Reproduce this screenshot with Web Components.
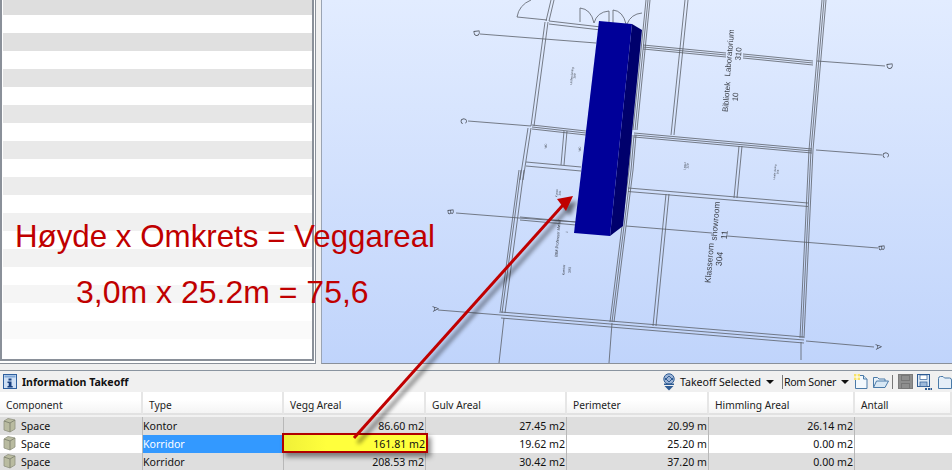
<!DOCTYPE html>
<html><head><meta charset="utf-8">
<style>
html,body{margin:0;padding:0;width:952px;height:470px;overflow:hidden;background:#f0f0f0}
body{font:10.6px "Noto Sans",Tahoma,sans-serif}
</style></head><body>
<app-shell>
  <stripe-panel slot="left"></stripe-panel>
  <model-view slot="view"></model-view>
  <takeoff-panel slot="bottom">
    <takeoff-row head>
      <takeoff-cell head>Component</takeoff-cell><takeoff-cell head>Type</takeoff-cell><takeoff-cell head>Vegg Areal</takeoff-cell><takeoff-cell head>Gulv Areal</takeoff-cell><takeoff-cell head>Perimeter</takeoff-cell><takeoff-cell head>Himmling Areal</takeoff-cell><takeoff-cell head last>Antall</takeoff-cell>
    </takeoff-row>
    <takeoff-row shade>
      <takeoff-cell icon>Space</takeoff-cell><takeoff-cell>Kontor</takeoff-cell><takeoff-cell num>86.60 m2</takeoff-cell><takeoff-cell num>27.45 m2</takeoff-cell><takeoff-cell num>20.99 m</takeoff-cell><takeoff-cell num>26.14 m2</takeoff-cell><takeoff-cell last></takeoff-cell>
    </takeoff-row>
    <takeoff-row>
      <takeoff-cell icon>Space</takeoff-cell><takeoff-cell selected>Korridor</takeoff-cell><takeoff-cell num mark>161.81 m2</takeoff-cell><takeoff-cell num>19.62 m2</takeoff-cell><takeoff-cell num>25.20 m</takeoff-cell><takeoff-cell num>0.00 m2</takeoff-cell><takeoff-cell last></takeoff-cell>
    </takeoff-row>
    <takeoff-row shade>
      <takeoff-cell icon>Space</takeoff-cell><takeoff-cell>Korridor</takeoff-cell><takeoff-cell num>208.53 m2</takeoff-cell><takeoff-cell num>30.42 m2</takeoff-cell><takeoff-cell num>37.20 m</takeoff-cell><takeoff-cell num>0.00 m2</takeoff-cell><takeoff-cell last></takeoff-cell>
    </takeoff-row>
  </takeoff-panel>
  <note-overlay slot="over"></note-overlay>
</app-shell>
<script>
function def(name, css, html, init){
  customElements.define(name, class extends HTMLElement{
    connectedCallback(){
      if(this.shadowRoot) return;
      const r=this.attachShadow({mode:'open'});
      r.innerHTML='<style>'+css+'</style>'+(typeof html==='function'?html(this):html);
      if(init) init(this,r);
    }
  });
}
def('app-shell',`
  :host{display:block;position:relative;width:952px;height:470px;overflow:hidden;background:#f0f0f0}
  .top{display:flex;height:364px}
  .gap{height:6px}
`,`<div class="top"><slot name="left"></slot><slot name="view"></slot></div><div class="gap"></div><slot name="bottom"></slot><slot name="over"></slot>`);

def('stripe-panel',`
  :host{display:block;width:316px;height:364px;box-sizing:border-box;flex:none;margin-right:5px;background:#fff;
    border-right:1px solid #8a9099;border-bottom:1px solid #8a9099}
  .in{box-sizing:border-box;height:361px;margin-bottom:1px;border-left:2px solid #8a9099;border-right:2px solid #8a9099;border-bottom:2px solid #8a9099;margin-left:0;margin-right:1px;padding-left:1px;background:#fff;overflow:hidden}
  .s{height:18px}
  .s:first-child{height:15px}
`,()=>{
  const g=['#dedede','#e0e0e0','#e3e3e3','#e6e6e6','#e9e9e9','#ececec','#f0f0f0','#f2f2f2','#f5f5f5','#fafafa'];
  return '<div class="in">'+g.map(c=>`<div class="s" style="background:${c}"></div><div class="s"></div>`).join('')+'</div>';
});

def('model-view',`
  :host{display:block;flex:1;height:363px;border-bottom:1px solid #8a9099;border-left:1px solid #9aa4b4;box-sizing:content-box;
    background:linear-gradient(#e2ecff,#c0d4fb);overflow:hidden}
  svg{display:block;filter:blur(.35px)}
  text{font-family:"Liberation Sans",Arial,sans-serif;fill:#3c4048}
`,`<svg id="s" width="631" height="363" viewBox="321 0 631 363" xmlns="http://www.w3.org/2000/svg"></svg>`,(el,r)=>{
  let o='';
  const L=(a,b,c,d,col='#5a6068',w=.8)=>{o+=`<line x1="${a}" y1="${b}" x2="${c}" y2="${d}" stroke="${col}" stroke-width="${w}"/>`};
  const W=(a,b,c,d,offs,dx,dy)=>offs.forEach(k=>L(a+k*dx,b+k*dy,c+k*dx,d+k*dy));
  const V=(a,b,c,d,offs)=>W(a,b,c,d,offs,1,0);
  const H=(a,b,c,d,offs)=>W(a,b,c,d,offs,0,1);
  L(479,34,595,43); L(816,61,884,66);
  L(467,121,530,126); L(815,150,881,155);
  L(455,213,518,218); L(518,218,575,222); L(625,226,711,233); L(726,236,877,248);
  L(437,310,500,315); L(805,341,873,347);
  V(821,0,808,150,[0,2,4]); V(808,150,799,338,[0,2,4]); L(800,342,800,360);
  V(550,0,545,21,[0,3]); V(544,22,530,126,[0,3]); V(527,128,519,180,[0,3]);
  V(520,170,501,313,[-2,0,3]); L(503,318,498,363);
  V(645,0,632,130,[0,2,4]); V(631,135,628,170,[0,2,4]); V(628,170,609,322,[0,2,4]); L(611,323,608,363);
  V(684,0,670,135,[0,3]);
  V(738,146,733,198,[0,3]);
  V(665,194,652,326,[0,3]);
  V(563,131,560,165,[0,3]);
  H(548,21,600,27,[0,3]); H(642,45,725,53,[0,2,4]); H(742,54,812,61,[0,2,4]);
  H(531,125,585,131,[0,2,4]);
  H(633,133,811,149,[0,2,4]);
  H(525,162,580,167,[0,4]);
  H(627,188,807,203,[0,3.5]);
  H(519,217,575,222,[0,3]);
  H(500,312,803,337,[0,3,6]);
  const P=(d)=>{o+=`<path d="${d}" fill="none" stroke="#5a6068" stroke-width=".8"/>`};
  P('M516 17Q518 5 530 0'); L(516,17,546,20);
  P('M579 8Q590 9 593 23'); L(579,8,579,22);
  P('M608 11Q596 12 593 23'); L(608,11,608,25);
  P('M612 10Q622 11 625 24'); L(612,10,612,25);
  P('M641 13Q630 14 626 24');
  o+=`<polygon points="631,24 641,30 622,226 609,236" fill="#00006c"/><polygon points="598,21 631,24 609,236 573,233" fill="#000099"/>`;
  const M=(t,x,y)=>{o+=`<text x="${x}" y="${y}" font-size="8.5" transform="rotate(85 ${x} ${y})" text-anchor="middle" dominant-baseline="middle">${t}</text>`};
  M('D',475,33);M('D',888,66);M('C',462,121);M('C',884,155);M('B',449,212);M('B',880,248);M('A',434,309);M('A',877,347);
  const T=(t,x,y,s)=>{o+=`<text x="${x}" y="${y}" font-size="${s}" transform="rotate(-85 ${x} ${y})" text-anchor="middle" dominant-baseline="middle">${t}</text>`};
  T('Laboratorium',729,53,8);T('310',738,54,8);T('Bibliotek',726,97,8);T('10',735,97,8);
  T('Klasserom',709,263,8.5);T('304',719,259,8.5);T('showroom',715,221,8.5);T('11',724,235,8.5);
  T('Undervisning',571,76,3);T('300',574,76,3);T('Lager',684,166,3);T('310',687,166,3);
  T('Undervisning',774,172,2.6);T('306',777,172,2.6);T('WC',545,146,3);T('WC',579,149,3);
  T('BIM Professor Møller',557,238,4);T('1',566,232,3);T('Kontor',563,270,3.5);T('303',569,270,3.5);T('Kontor',556,193,2.8);T('301',559,193,2.8);
  r.getElementById('s').innerHTML=o;
});

const icon=(k)=>({
 info:`<svg width="14" height="15" viewBox="0 0 14 15"><rect x=".5" y=".5" width="13" height="14" fill="#cfe0f5" stroke="#2e5f9e"/><rect x="1.5" y="1.5" width="11" height="2" fill="#7fa6d6"/><rect x="5.500" y="4.500" width="3" height="2" fill="#173f80"/><path d="M4.500 7.500h4v4.500h1.200v1.500H4.500V12h1.200V9H4.500z" fill="#173f80"/></svg>`,
 takeoff:`<svg width="14" height="18" viewBox="0 0 14 18"><circle cx="7" cy="6" r="5.200" fill="#9db4d6" stroke="#2f5c94"/><path d="M3 5l4 4 4-4M3 7l4-4 4 4" stroke="#2f5c94" fill="none"/><rect x="2" y="10.500" width="10" height="1.500" fill="#2f5c94"/><path d="M2.500 13h9L7 17.500z" fill="#2f5c94"/></svg>`,
 neu:`<svg width="14" height="16" viewBox="0 0 14 16"><path d="M3.500 1.500h6l3.500 3.500v9.500H1.500v-9" fill="#f2f8fd" stroke="#4a7aa8"/><path d="M9.500 1.500v3.500h3.500" fill="#d3e4f3" stroke="#4a7aa8"/><path d="M0 0h6v6H0z" fill="#f7e26a"/><path d="M3 0v6M0 3h6" stroke="#fff" stroke-width="1"/></svg>`,
 open:`<svg width="17" height="14" viewBox="0 0 17 14"><path d="M1.500 12.500V2.500h4l1.500 1.500h6v2" fill="#e8f1f9" stroke="#4a7aa8"/><path d="M1.500 12.500l3-6.500h12l-3.500 6.500z" fill="#d7e7f4" stroke="#4a7aa8"/></svg>`,
 savedis:`<svg width="15" height="15" viewBox="0 0 15 15"><rect width="15" height="15" fill="#8e8e8e"/><rect x=".5" y=".5" width="14" height="14" fill="none" stroke="#7b7b7b"/><rect x="3.500" y="1.500" width="8" height="5" fill="none" stroke="#777"/><rect x="3.500" y="9.500" width="8" height="5" fill="none" stroke="#777"/></svg>`,
 save:`<svg width="15" height="16" viewBox="0 0 15 16"><rect x=".5" y=".5" width="12" height="12" fill="#dbe8f5" stroke="#2f5c94"/><rect x="3" y="1" width="7" height="4.500" fill="#fff" stroke="#2f5c94" stroke-width=".7"/><rect x="3" y="8" width="7" height="4.500" fill="#9db9da" stroke="#2f5c94" stroke-width=".7"/><path d="M8 14h2v2H8zM11 14h2v2h-2zM13.500 14h1.500v2h-1.500z" fill="#2f5c94"/></svg>`,
 folder:`<svg width="14" height="14" viewBox="0 0 14 14"><path d="M.5 3.500Q.5 1.500 2.500 1.500h2.500l1.500 1.500h5q2 0 2 2v8.500h-13z" fill="#e4eef8" stroke="#4a7aa8"/></svg>`,
 cube:`<svg width="13" height="15" viewBox="0 0 13 15"><path d="M1 3l4-2.500 7 1.500v9l-5 3-6-2z" fill="#b9bba0" stroke="#8f9280" stroke-width=".8"/><path d="M1 3l6 2 5-3M7 5v9" fill="none" stroke="#7f8270" stroke-width=".9"/></svg>`
})[k];

def('takeoff-panel',`
  :host{display:block;height:100px}
  .bar{height:21px;border-top:1px solid #8a94a0;display:flex;align-items:center;background:#f0f0f0;color:#111}
  .i{display:flex;margin:0 5px 0 3px}
  b{font:bold 10.6px "Noto Sans",Tahoma,sans-serif}
  .sp{flex:1}
  .t{display:flex;align-items:center}
  .arrow{width:0;height:0;border:4px solid transparent;border-top:4px solid #111;border-bottom:0;margin:0 5px 0 5px}
  .sep{width:1px;height:14px;background:#777;margin:0 3px}
  .sep.n{margin:0 1px 0 3px}
  .rom{letter-spacing:-.3px}
  .t svg{display:block}
`,`<div class="bar"><span class="i">${icon('info')}</span><b>Information Takeoff</b><span class="sp"></span>
  <div class="t">${icon('takeoff')}<span style="width:4px"></span><span>Takeoff Selected</span><span class="arrow"></span><span class="sep n"></span><span class="rom">Rom Soner</span><span class="arrow"></span>${icon('neu')}<span style="width:4px"></span>${icon('open')}<span class="sep"></span><span style="width:2px"></span>${icon('savedis')}<span style="width:4px"></span>${icon('save')}<span style="width:6px"></span>${icon('folder')}</div>
</div><slot></slot>`);

def('takeoff-row',`
  :host{display:grid;grid-template-columns:143px 141px 142px 141px 142px 146px 97px;height:18px;background:#fff}
  :host([shade]){background:#dedede}
  :host([head]){height:25px;background:linear-gradient(#fff 0,#fff 30%,#f1f1f1 100%)}
`,`<slot></slot>`);

def('takeoff-cell',`
  :host{display:flex;align-items:center;box-sizing:border-box;min-width:0;border-right:1px solid #b8b8b8;color:#111;white-space:nowrap;overflow:hidden;padding:0 0 1px 0;position:relative}
  :host([last]){border-right:0}
  :host([num]){justify-content:flex-end;padding-right:1px}
  :host([head]){padding:4px 0 0 6px;border-right:2px solid #e6e6e6;border-bottom:2px solid #e2e2e2;height:23px;color:#222;font-size:10.2px}
  :host([selected]){background:#3399ff;color:#fff;margin-right:2px;border-right:0}
  .c{display:flex;margin:0 5px 0 3px}
  :host([mark]){overflow:visible;z-index:1;border-right:0}
  :host([mark])::before{content:"";position:absolute;left:-2px;right:-2px;top:-2px;bottom:0;box-sizing:border-box;border:2px solid #b00000;
    background:linear-gradient(90deg,#f0f038,#ffff3c 30%,#ffff3c);box-shadow:3px 4px 5px rgba(0,0,0,.45)}
  .txt{position:relative}
`,(el)=>(el.hasAttribute('icon')?`<span class="c">${icon('cube')}</span>`:'')+'<span class="txt"><slot></slot></span>');

def('note-overlay',`
  :host{display:block;position:absolute;left:0;top:0;width:952px;height:470px;pointer-events:none;z-index:2}
  .l{position:absolute;font-family:"Liberation Sans",Arial,sans-serif;color:#c00000;white-space:nowrap;line-height:32px}
  .a{left:15px;top:221px;font-size:31.3px}
  .b{left:76px;top:276px;font-size:32px}
  svg{position:absolute;left:0;top:0;overflow:visible}
`,`<div class="l a">Høyde x Omkrets = Veggareal</div><div class="l b">3,0m x 25.2m = 75,6</div>
<svg width="952" height="470" viewBox="0 0 952 470">
<defs><filter id="sh" x="-20%" y="-20%" width="140%" height="140%"><feGaussianBlur stdDeviation="2"/></filter></defs>
<g filter="url(#sh)" opacity=".55" transform="translate(4 5)"><line x1="354" y1="438" x2="563" y2="205" stroke="#000" stroke-width="3"/><polygon points="573,196 558,200 566,211" fill="#000"/></g>
<line x1="354" y1="438" x2="563" y2="205" stroke="#c00000" stroke-width="3"/><polygon points="573,196 557,199 566,211" fill="#c00000"/>
</svg>`);
</script>
</body></html>
